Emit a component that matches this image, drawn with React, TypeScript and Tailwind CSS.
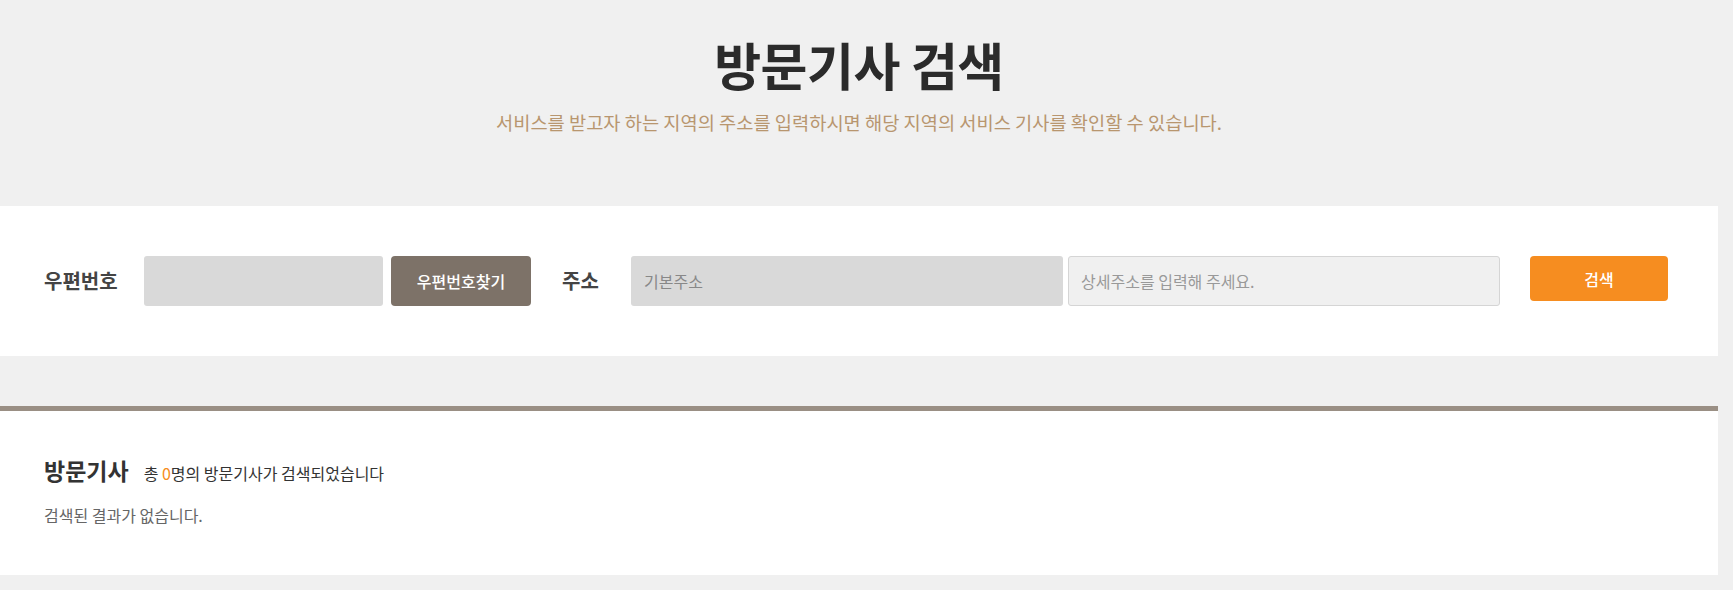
const font = { fontFamily: '"Noto Sans CJK KR", "Noto Sans", sans-serif' }

export default function App() {
  return (
    <div className="min-h-screen w-full bg-[#f0f0f0]" style={font}>
      <div className="w-[1718px]">
        {/* header */}
        <div className="pt-[34px] pb-[72px] text-center">
          <h1 className="text-[51px] leading-[60px] font-bold text-[#2b2b2b] tracking-[-0.5px]">방문기사 검색</h1>
          <p className="mt-[16px] text-[18.7px] leading-[24px] text-[#b8966f]">
            서비스를 받고자 하는 지역의 주소를 입력하시면 해당 지역의 서비스 기사를 확인할 수 있습니다.
          </p>
        </div>

        {/* search form */}
        <div className="bg-white h-[150px] px-[44px] py-[50px] flex items-start">
          <label className="w-[100px] leading-[50px] text-[20px] font-bold text-[#444]">우편번호</label>
          <input
            type="text"
            readOnly
            className="w-[239px] h-[50px] rounded-[3px] bg-[#d9d9d9] outline-none"
          />
          <button className="ml-[8px] w-[140px] h-[50px] rounded-[4px] bg-[#7d7268] text-white text-[16px] font-medium">
            우편번호찾기
          </button>
          <label className="ml-[31px] w-[69px] leading-[50px] text-[20px] font-bold text-[#444]">주소</label>
          <input
            type="text"
            readOnly
            placeholder="기본주소"
            className="w-[432px] h-[50px] rounded-[3px] bg-[#d9d9d9] px-[13px] text-[16px] outline-none placeholder:text-[#888]"
          />
          <input
            type="text"
            placeholder="상세주소를 입력해 주세요."
            className="ml-[5px] w-[432px] h-[50px] rounded-[3px] border border-[#d5d5d5] bg-[#f0f0f0] px-[12px] text-[16px] outline-none placeholder:text-[#999]"
          />
          <button className="ml-[30px] w-[138px] h-[45px] rounded-[4px] bg-[#f68d20] text-white text-[16px] font-medium">
            검색
          </button>
        </div>

        {/* results */}
        <div className="mt-[50px] border-t-[5px] border-[#9a8f84] bg-white px-[44px] pt-[44px] pb-[49px]">
          <div className="flex items-baseline">
            <h2 className="text-[23px] leading-[30px] font-bold text-[#333]">방문기사</h2>
            <p className="ml-[15px] text-[16px] text-[#333]">
              총 <span className="text-[#f68d20]">0</span>명의 방문기사가 검색되었습니다
            </p>
          </div>
          <p className="mt-[19px] text-[16px] leading-[22px] text-[#666]">검색된 결과가 없습니다.</p>
        </div>
      </div>
    </div>
  )
}
